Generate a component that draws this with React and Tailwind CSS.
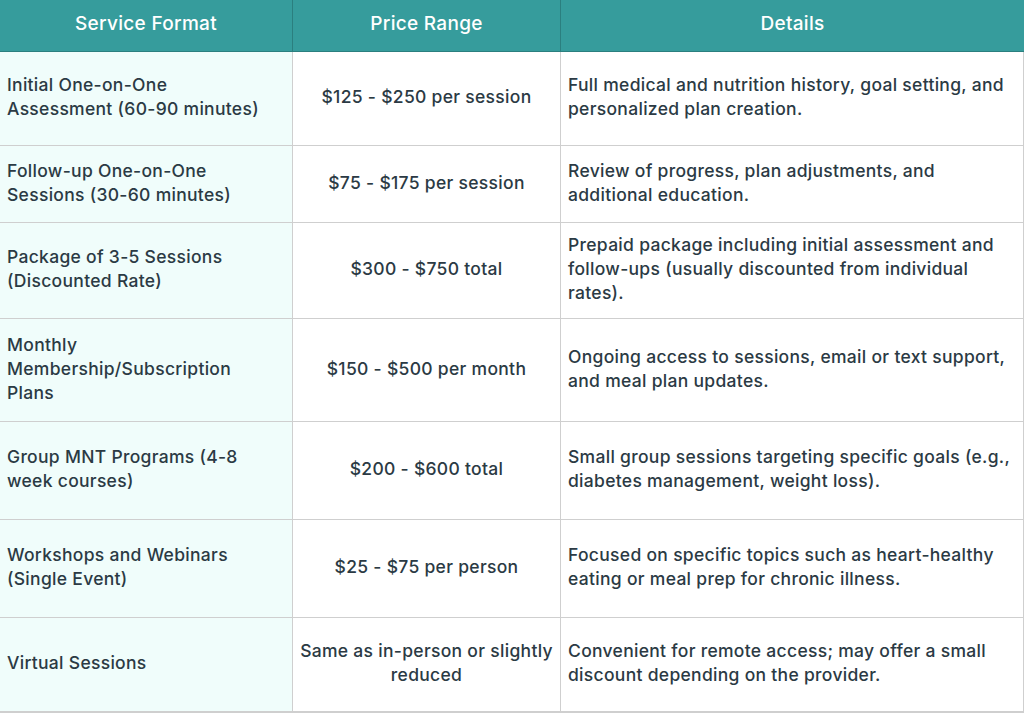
import React from 'react';

const rows = [
  {
    h: 'h-[94px]',
    format: ['Initial One-on-One', 'Assessment (60-90 minutes)'],
    price: ['$125 - $250 per session'],
    details: ['Full medical and nutrition history, goal setting, and', 'personalized plan creation.'],
  },
  {
    h: 'h-[77px]',
    format: ['Follow-up One-on-One', 'Sessions (30-60 minutes)'],
    price: ['$75 - $175 per session'],
    details: ['Review of progress, plan adjustments, and', 'additional education.'],
  },
  {
    h: 'h-[96px]',
    format: ['Package of 3-5 Sessions', '(Discounted Rate)'],
    price: ['$300 - $750 total'],
    details: ['Prepaid package including initial assessment and', 'follow-ups (usually discounted from individual', 'rates).'],
  },
  {
    h: 'h-[103px]',
    format: ['Monthly', 'Membership/Subscription', 'Plans'],
    price: ['$150 - $500 per month'],
    details: ['Ongoing access to sessions, email or text support,', 'and meal plan updates.'],
  },
  {
    h: 'h-[98px]',
    format: ['Group MNT Programs (4-8', 'week courses)'],
    price: ['$200 - $600 total'],
    details: ['Small group sessions targeting specific goals (e.g.,', 'diabetes management, weight loss).'],
  },
  {
    h: 'h-[98px]',
    format: ['Workshops and Webinars', '(Single Event)'],
    price: ['$25 - $75 per person'],
    details: ['Focused on specific topics such as heart-healthy', 'eating or meal prep for chronic illness.'],
  },
  {
    h: 'h-[94px]',
    format: ['Virtual Sessions'],
    price: ['Same as in-person or slightly', 'reduced'],
    details: ['Convenient for remote access; may offer a small', 'discount depending on the provider.'],
  },
];

const Lines = ({ lines }) =>
  lines.map((l, i) => (
    <span key={i} className="block whitespace-nowrap">
      {l}
    </span>
  ));

export default function App() {
  return (
    <div
      className="w-[1024px] h-[713px] bg-white text-[#2b3a44] text-[17.5px] leading-[24px] tracking-[0.3px] font-medium"
      style={{ fontFamily: 'Inter, "Open Sans", sans-serif' }}
    >
      <div className="grid grid-cols-[293px_268px_463px] border-r border-b border-[#cfcfcf]">
        <div className="h-[52px] pb-[3px] bg-[#369c9c] text-white text-[19px] flex items-center justify-center border-r border-b border-[#2b7f7f]">
          Service Format
        </div>
        <div className="h-[52px] pb-[3px] bg-[#369c9c] text-white text-[19px] flex items-center justify-center border-r border-b border-[#2b7f7f]">
          Price Range
        </div>
        <div className="h-[52px] pb-[3px] bg-[#369c9c] text-white text-[19px] flex items-center justify-center border-b border-[#2b7f7f]">
          Details
        </div>
        {rows.map((r, i) => (
          <React.Fragment key={i}>
            <div className={`${r.h} pb-[3px] bg-[#f0fdfb] flex flex-col justify-center px-[7px] border-r border-b border-[#cfcfcf]`}>
              <Lines lines={r.format} />
            </div>
            <div className={`${r.h} pb-[3px] flex flex-col justify-center items-center text-center px-[7px] border-r border-b border-[#cfcfcf]`}>
              <Lines lines={r.price} />
            </div>
            <div className={`${r.h} pb-[3px] flex flex-col justify-center px-[7px] border-b border-[#cfcfcf]`}>
              <Lines lines={r.details} />
            </div>
          </React.Fragment>
        ))}
      </div>
    </div>
  );
}
